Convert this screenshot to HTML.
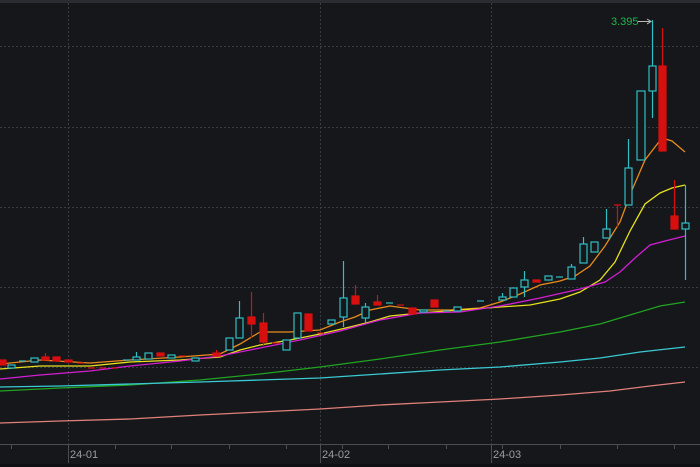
<!DOCTYPE html>
<html><head><meta charset="utf-8"><style>
html,body{margin:0;padding:0;background:#15171b;width:700px;height:467px;overflow:hidden}
svg{display:block}
text{font-family:"Liberation Sans",sans-serif}
</style></head><body>
<svg width="700" height="467" viewBox="0 0 700 467" xmlns="http://www.w3.org/2000/svg">
<rect width="700" height="467" fill="#15171b"/>
<rect x="0" y="0" width="700" height="3" fill="#2a2c31"/>
<g stroke="#3a3d43" stroke-width="1" stroke-dasharray="2,2">
<line x1="0" y1="46.5" x2="700" y2="46.5"/>
<line x1="0" y1="127.5" x2="700" y2="127.5"/>
<line x1="0" y1="207.5" x2="700" y2="207.5"/>
<line x1="0" y1="287.5" x2="700" y2="287.5"/>
<line x1="0" y1="367.5" x2="700" y2="367.5"/>
<line x1="68.5" y1="3" x2="68.5" y2="444"/>
<line x1="320.5" y1="3" x2="320.5" y2="444"/>
<line x1="491.5" y1="3" x2="491.5" y2="444"/>
</g>
<!-- MA lines -->
<g fill="none" stroke-width="1.3">
<polyline stroke="#e98b1c" points="0,364 40,360 90,363 130,360 180,357 220,354 240,344 260,332 290,332 320,330 340,322 355,317 370,310 390,306 420,310 450,310 480,308 500,302 520,294 540,285 560,281 575,276 590,266 605,246 620,222 632,190 645,160 655,147 662,138 672,141 685,152"/>
<polyline stroke="#e8e01c" points="0,369 40,366 90,366 130,362 180,360 220,357 240,350 260,345 290,340 320,334 350,327 370,322 390,316 420,313 460,310 500,307 530,305 560,299 580,292 600,280 615,262 630,231 645,204 660,193 672,188 685,185"/>
<polyline stroke="#d21fd2" points="0,379 40,375 90,371 130,366 180,361 220,356 260,348 300,340 340,331 380,320 420,313 460,312 500,306 540,298 580,289 605,282 620,272 635,258 650,245 665,241 685,236"/>
<polyline stroke="#21a321" points="0,391 60,388 130,385 200,380 260,374 320,367 380,359 440,350 500,342 560,332 600,324 630,315 660,306 685,302"/>
<polyline stroke="#3bc9d2" points="0,387 60,386 130,384 200,382 260,380 320,378 380,374 440,370 500,367 560,362 600,358 640,352 685,347"/>
<polyline stroke="#e0807a" points="0,423 60,421 130,419 200,415 260,412 320,409 380,405 440,402 500,399 560,395 610,391 650,386 685,382"/>
</g>
<!-- candles -->
<g stroke-width="1.2">
<g stroke="#2fbfc4" fill="#15171b">
<rect x="8" y="365" width="7" height="3"/>
<rect x="31" y="358" width="7" height="4"/>
<line x1="22" y1="361" x2="22" y2="361.5"/><line x1="19" y1="361" x2="26" y2="361"/>
<line x1="123" y1="360" x2="130" y2="360"/>
<rect x="133" y="357" width="7" height="3"/><line x1="136.5" y1="352" x2="136.5" y2="357"/>
<rect x="145" y="353" width="7" height="6"/>
<rect x="168" y="355" width="7" height="3"/>
<rect x="192" y="358" width="7" height="3"/>
<rect x="226" y="338" width="7" height="12"/>
<rect x="236" y="318" width="7" height="20"/><line x1="239.5" y1="301" x2="239.5" y2="318"/>
<rect x="283" y="340" width="7" height="10"/>
<rect x="294" y="313" width="7" height="25"/>
<rect x="328" y="320" width="7" height="4"/>
<rect x="340" y="298" width="7" height="19"/><line x1="343.5" y1="261" x2="343.5" y2="298"/><line x1="343.5" y1="317" x2="343.5" y2="327"/>
<rect x="362" y="307" width="7" height="11"/><line x1="365.5" y1="303" x2="365.5" y2="307"/><line x1="365.5" y1="318" x2="365.5" y2="323"/>
<line x1="386" y1="303" x2="393" y2="303"/>
<rect x="420" y="310" width="7" height="2"/>
<line x1="443" y1="311" x2="450" y2="311"/>
<rect x="454" y="307" width="7" height="4"/>
<line x1="477" y1="301" x2="484" y2="301"/>
<rect x="499" y="297" width="7" height="3"/><line x1="502.5" y1="293" x2="502.5" y2="297"/>
<rect x="510" y="288" width="7" height="9"/>
<rect x="521" y="280" width="7" height="7"/><line x1="524.5" y1="271" x2="524.5" y2="280"/><line x1="524.5" y1="287" x2="524.5" y2="297"/>
<rect x="545" y="276" width="7" height="4"/>
<line x1="556" y1="277" x2="563" y2="277"/>
<rect x="568" y="267" width="7" height="12"/><line x1="571.5" y1="264" x2="571.5" y2="267"/>
<rect x="580" y="244" width="7" height="19"/><line x1="583.5" y1="237" x2="583.5" y2="244"/>
<rect x="591" y="242" width="7" height="10"/>
<rect x="603" y="229" width="7" height="9"/><line x1="606.5" y1="209" x2="606.5" y2="229"/>
<rect x="625" y="168" width="7" height="37"/><line x1="628.5" y1="139" x2="628.5" y2="168"/>
<rect x="637" y="91" width="8" height="69"/>
<rect x="649" y="66" width="7" height="25"/><line x1="652.5" y1="20" x2="652.5" y2="66"/><line x1="652.5" y1="91" x2="652.5" y2="118"/>
<rect x="682" y="223" width="7" height="6"/><line x1="685.5" y1="185" x2="685.5" y2="223"/><line x1="685.5" y1="229" x2="685.5" y2="280"/>
</g>
<g stroke="#d80f0f" fill="#d80f0f">
<rect x="0" y="360" width="6" height="5"/>
<rect x="42" y="357" width="7" height="3"/><line x1="45.5" y1="353" x2="45.5" y2="357"/>
<rect x="53" y="357" width="7" height="4"/>
<rect x="65" y="360" width="7" height="2"/>
<line x1="77" y1="363" x2="84" y2="363"/>
<line x1="88" y1="368" x2="95" y2="368"/>
<line x1="99" y1="368" x2="106" y2="368"/>
<line x1="111" y1="368" x2="118" y2="368"/>
<rect x="157" y="353" width="7" height="3"/>
<line x1="179" y1="356" x2="186" y2="356"/>
<rect x="213" y="353" width="7" height="3"/><line x1="216.5" y1="350" x2="216.5" y2="353"/>
<rect x="248" y="317" width="7" height="7"/><line x1="251.5" y1="292" x2="251.5" y2="338"/>
<rect x="260" y="323" width="7" height="19"/><line x1="263.5" y1="313" x2="263.5" y2="346"/>
<line x1="272" y1="343" x2="279" y2="343"/>
<rect x="305" y="314" width="7" height="17"/>
<line x1="317" y1="333" x2="324" y2="333"/>
<rect x="352" y="296" width="7" height="8"/><line x1="355.5" y1="285" x2="355.5" y2="296"/>
<rect x="374" y="302" width="7" height="3"/><line x1="377.5" y1="295" x2="377.5" y2="302"/>
<line x1="397" y1="305" x2="404" y2="305"/>
<rect x="409" y="308" width="7" height="6"/>
<rect x="431" y="300" width="7" height="7"/>
<rect x="533" y="280" width="7" height="2"/>
<line x1="614" y1="205" x2="621" y2="205"/><line x1="617.5" y1="205" x2="617.5" y2="228"/>
<rect x="659" y="66" width="7" height="85"/><line x1="662.5" y1="28" x2="662.5" y2="66"/>
<rect x="671" y="216" width="7" height="13"/><line x1="674.5" y1="180" x2="674.5" y2="216"/>
</g>
</g>
<!-- max label -->
<text x="611" y="25" font-size="11" fill="#1fb84a">3.395</text>
<line x1="638" y1="21.5" x2="651" y2="21.5" stroke="#bbb" stroke-width="1"/>
<path d="M647,19 L651,21.5 L647,24" fill="none" stroke="#bbb" stroke-width="1"/>
<!-- axis -->
<rect x="0" y="444" width="700" height="1" fill="#4a4d53"/>
<g stroke="#4a4d53" stroke-width="1">
<line x1="11.5" y1="445" x2="11.5" y2="449"/><line x1="115.5" y1="445" x2="115.5" y2="449"/>
<line x1="171.5" y1="445" x2="171.5" y2="449"/><line x1="229.5" y1="445" x2="229.5" y2="449"/>
<line x1="286.5" y1="445" x2="286.5" y2="449"/><line x1="342.5" y1="445" x2="342.5" y2="449"/>
<line x1="388.5" y1="445" x2="388.5" y2="449"/><line x1="446.5" y1="445" x2="446.5" y2="449"/>
<line x1="502.5" y1="445" x2="502.5" y2="449"/>
<line x1="560.5" y1="445" x2="560.5" y2="449"/><line x1="617.5" y1="445" x2="617.5" y2="449"/>
<line x1="674.5" y1="445" x2="674.5" y2="449"/>
<line x1="68.5" y1="445" x2="68.5" y2="463"/><line x1="320.5" y1="445" x2="320.5" y2="463"/><line x1="491.5" y1="445" x2="491.5" y2="463"/>
</g>
<g font-size="11" fill="#9a9da3">
<text x="70" y="458">24-01</text>
<text x="322" y="458">24-02</text>
<text x="493" y="458">24-03</text>
</g>
<rect x="0" y="464" width="700" height="3" fill="#0f1013"/>
</svg>
</body></html>
